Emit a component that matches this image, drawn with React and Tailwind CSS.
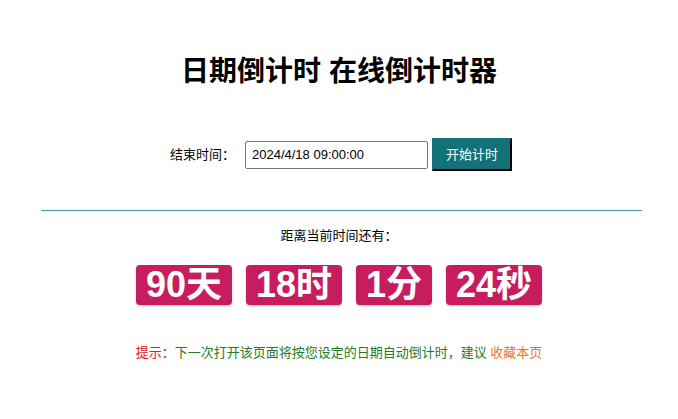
import React, { useState } from "react";

function Badge({ value, unit }) {
  return (
    <span className="inline-flex items-center h-[40px] px-[10px] rounded-[4px] bg-[#c71d5f] text-white text-[36px] font-bold leading-none shadow-[0_1px_2px_rgba(0,0,0,0.25)]">
      {value}
      {unit}
    </span>
  );
}

export default function App() {
  const [endTime, setEndTime] = useState("2024/4/18 09:00:00");

  return (
    <div className="min-h-[419px] bg-white text-black font-['Liberation_Sans','Noto_Sans_CJK_SC',sans-serif]">
      <h1 className="pt-[54px] text-center text-[28px] font-bold leading-[36px]">
        日期倒计时 在线倒计时器
      </h1>

      <div className="mt-[48px] pl-[4px] flex items-center justify-center text-[13px]">
        <label className="mr-[10px]">结束时间：</label>
        <input
          type="text"
          value={endTime}
          onChange={(e) => setEndTime(e.target.value)}
          className="w-[183px] h-[28px] px-[6px] border border-[#767676] rounded-[2px] text-[13px] outline-none"
        />
        <button
          type="button"
          className="ml-[4px] w-[80px] h-[33px] bg-[#127179] text-white text-[13px] border-2 border-t-[#127179] border-l-[#127179] border-b-black border-r-black"
        >
          开始计时
        </button>
      </div>

      <div className="ml-[41px] mr-[36px] mt-[39px] h-px bg-[#3aa5a8]" />

      <p className="mt-[16px] text-center text-[13px] leading-[18px]">距离当前时间还有：</p>

      <div className="mt-[20px] flex justify-center gap-[14px]">
        <Badge value="90" unit="天" />
        <Badge value="18" unit="时" />
        <Badge value="1" unit="分" />
        <Badge value="24" unit="秒" />
      </div>

      <p className="mt-[39px] text-center text-[13px] leading-[18px] text-[#237a2c]">
        <span className="text-[#e02020]">提示：</span>
        下一次打开该页面将按您设定的日期自动倒计时，建议{" "}
        <span className="text-[#e8772e]">收藏本页</span>
      </p>
    </div>
  );
}
